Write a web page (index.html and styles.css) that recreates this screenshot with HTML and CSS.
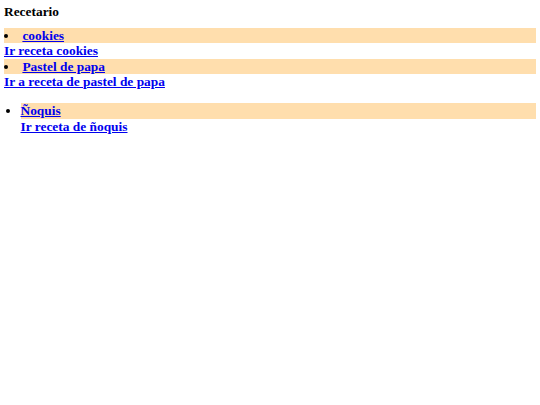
FILE: index.html
```html
<!DOCTYPE html>
<html lang="es">
<head>
<meta charset="utf-8">
<title>Recetario</title>
<link rel="stylesheet" href="styles.css">
</head>
<body>
<div class="title">Recetario</div>
<li class="item inside"><a href="#">cookies</a></li>
<a class="go" href="#">Ir receta cookies</a>
<li class="item inside"><a href="#">Pastel de papa</a></li>
<a class="go" href="#">Ir a receta de pastel de papa</a>
<ul class="list">
  <li class="item"><a href="#">Ñoquis</a></li>
  <a class="go" href="#">Ir receta de ñoquis</a>
</ul>
</body>
</html>
```
FILE: styles.css
```css
body {
  margin: 4px;
  font-family: "Liberation Serif", "Times New Roman", serif;
  font-size: 13.4px;
  line-height: 15.5px;
  font-weight: bold;
  color: #000;
}
.title {
  margin: 0 0 8px 0;
}
a {
  color: #0000ee;
  text-decoration: underline;
}
.item {
  background: #ffdead;
  display: list-item;
  list-style-type: disc;
}
.inside {
  list-style-position: inside;
}
.go {
  display: block;
}
.list {
  margin: 13.6px 0 0 0;
  padding: 0 0 0 16.5px;
}
.list .item {
  list-style-position: outside;
}
```
